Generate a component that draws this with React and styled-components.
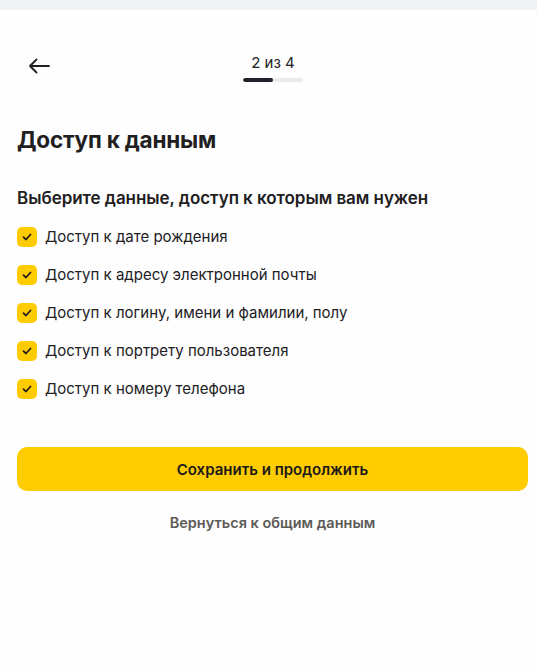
import React from "react";
import styled, { createGlobalStyle } from "styled-components";

const Global = createGlobalStyle`
  html, body { margin: 0; padding: 0; background: #fefefe; }
  body { font-family: Inter, "Noto Sans", "Liberation Sans", sans-serif; color: #21201f; }
  * { box-sizing: border-box; }
`;

const TopStrip = styled.div`
  height: 10px;
  background-color: #f1f3f4;
  background-image: radial-gradient(#e7ecee 1px, transparent 1px);
  background-size: 3px 3px;
`;

const Page = styled.div`
  padding: 0 9px 0 17px;
`;

const Header = styled.div`
  display: grid;
  grid-template-columns: 1fr auto 1fr;
  align-items: center;
  padding-top: 43px;
`;

const BackButton = styled.button`
  justify-self: start;
  border: 0;
  background: none;
  padding: 0 0 0 11px;
  margin-top: -4px;
  display: flex;
  cursor: pointer;
`;

const Stepper = styled.div`
  display: flex;
  flex-direction: column;
  align-items: center;
  margin-left: 1px;
`;

const StepText = styled.div`
  font-size: 15px;
  line-height: 20px;
  color: #21201f;
`;

const Track = styled.div`
  width: 60px;
  height: 4px;
  margin-top: 5px;
  border-radius: 2px;
  background: #e9e9ee;
  overflow: hidden;
`;

const Fill = styled.div`
  height: 100%;
  border-radius: 2px;
  background: #21202b;
`;

const Title = styled.h1`
  margin: 44px 0 0;
  font-size: 22.5px;
  line-height: 28px;
  font-weight: 700;
  letter-spacing: -0.2px;
`;

const Subtitle = styled.h2`
  margin: 32px 0 0;
  font-size: 17px;
  line-height: 24px;
  font-weight: 600;
  letter-spacing: -0.05px;
`;

const List = styled.div`
  display: flex;
  flex-direction: column;
  gap: 18px;
  margin-top: 17px;
`;

const Row = styled.label`
  display: flex;
  align-items: center;
  gap: 8px;
  font-size: 15px;
  line-height: 20px;
  cursor: pointer;
`;

const Box = styled.span`
  width: 20px;
  height: 20px;
  border-radius: 5px;
  background: #ffcc00;
  display: flex;
  align-items: center;
  justify-content: center;
  flex: none;
`;

const PrimaryButton = styled.button`
  display: block;
  width: 100%;
  margin-top: 48px;
  height: 44px;
  border: 0;
  border-radius: 10px;
  background: #ffcc00;
  font-family: inherit;
  font-size: 15px;
  font-weight: 600;
  color: #1a1917;
  cursor: pointer;
`;

const LinkButton = styled.button`
  display: block;
  margin: 22px auto 0;
  border: 0;
  background: none;
  font-family: inherit;
  font-size: 14.5px;
  font-weight: 600;
  color: #5c5a57;
  cursor: pointer;
`;

const items = [
  "Доступ к дате рождения",
  "Доступ к адресу электронной почты",
  "Доступ к логину, имени и фамилии, полу",
  "Доступ к портрету пользователя",
  "Доступ к номеру телефона",
];

const Check = () => (
  <svg width="10" height="8" viewBox="0 0 10 8" fill="none">
    <path d="M1.5 4.2 L4 6.5 L8.5 1.5" stroke="#21201f" strokeWidth="1.8" strokeLinecap="round" strokeLinejoin="round" />
  </svg>
);

const Arrow = () => (
  <svg width="22" height="16" viewBox="0 0 22 16" fill="none">
    <path d="M21 8 H2 M8.5 1.5 L2 8 L8.5 14.5" stroke="#21201f" strokeWidth="1.8" strokeLinecap="round" strokeLinejoin="round" />
  </svg>
);

export default function App() {
  return (
    <>
      <Global />
      <TopStrip />
      <Page>
        <Header>
          <BackButton aria-label="Назад"><Arrow /></BackButton>
          <Stepper>
            <StepText>2 из 4</StepText>
            <Track><Fill style={{ width: `${(2 / 4) * 100}%` }} /></Track>
          </Stepper>
          <div />
        </Header>
        <Title>Доступ к данным</Title>
        <Subtitle>Выберите данные, доступ к которым вам нужен</Subtitle>
        <List>
          {items.map((t) => (
            <Row key={t}>
              <Box><Check /></Box>
              {t}
            </Row>
          ))}
        </List>
        <PrimaryButton>Сохранить и продолжить</PrimaryButton>
        <LinkButton>Вернуться к общим данным</LinkButton>
      </Page>
    </>
  );
}
